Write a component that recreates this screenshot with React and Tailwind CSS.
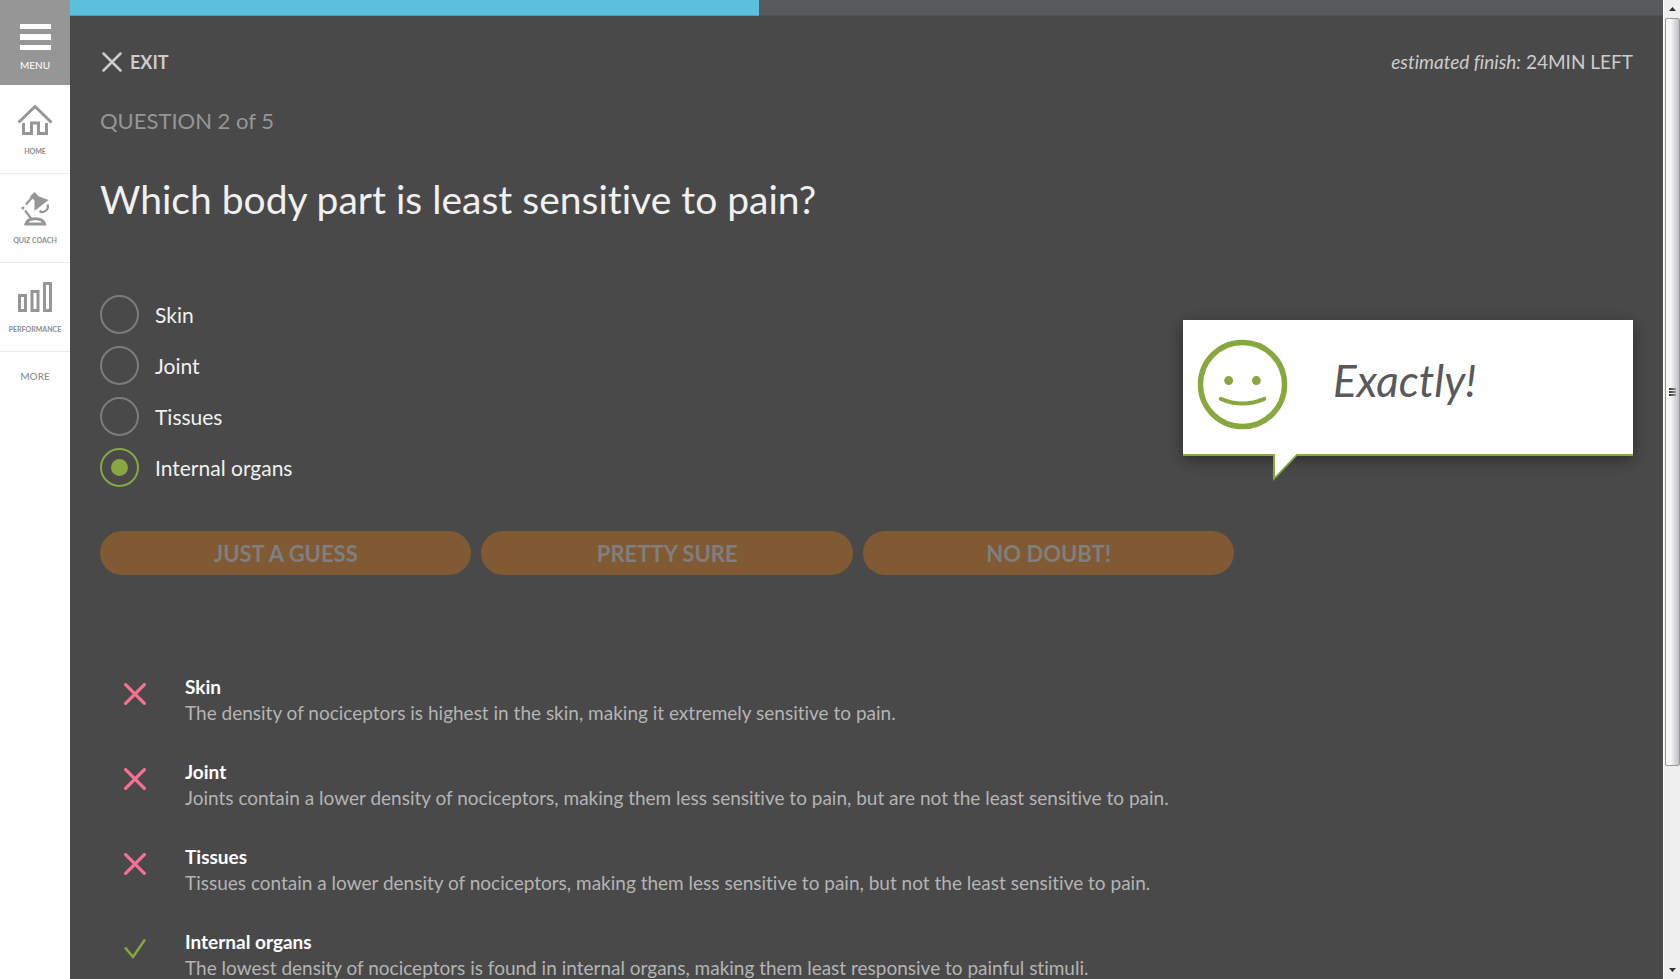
const answers = [
  { id: 'skin', label: 'Skin', correct: false, note: 'The density of nociceptors is highest in the skin, making it extremely sensitive to pain.' },
  { id: 'joint', label: 'Joint', correct: false, note: 'Joints contain a lower density of nociceptors, making them less sensitive to pain, but are not the least sensitive to pain.' },
  { id: 'tissues', label: 'Tissues', correct: false, note: 'Tissues contain a lower density of nociceptors, making them less sensitive to pain, but not the least sensitive to pain.' },
  { id: 'organs', label: 'Internal organs', correct: true, note: 'The lowest density of nociceptors is found in internal organs, making them least responsive to painful stimuli.' },
];

function HomeIcon() {
  return (
    <svg className="h-[34px] w-9" viewBox="0 0 36 34" fill="none" stroke="#969696" strokeWidth="3" aria-hidden="true">
      <path d="M1.500 19.500 18 3.500l16.500 16" />
      <path d="M6.500 20v10.500h8V20h7v10.500h8V20" />
    </svg>
  );
}

function LampIcon() {
  return (
    <svg className="h-[34px] w-9" viewBox="0 0 36 34" fill="none" stroke="#969696" strokeWidth="2.200" aria-hidden="true">
      <path d="M17.500 0l4.500 4.500L31.500 8 17.500 19V8.500l-4.500-4z" fill="#969696" stroke="none" />
      <path d="M15 5.500 9 12.500" />
      <circle cx="6" cy="16" r="1.600" fill="#969696" stroke="none" />
      <path d="M8 18.500 14.500 27" />
      <path d="M30.500 12.500c2 5-4 9.500-8 6.500" />
      <path d="M9 32c2-7 16.500-7 18.500 0z" strokeWidth="3" />
    </svg>
  );
}

function BarsIcon() {
  return (
    <svg className="h-[34px] w-9" viewBox="0 0 36 34" fill="none" stroke="#969696" strokeWidth="3" aria-hidden="true">
      <path d="M2.500 14.500h6v15h-6zM15 10.500h6v19h-6zM27.500 2.500h6v27h-6z" />
    </svg>
  );
}

const nav = [
  { label: 'HOME', Icon: HomeIcon },
  { label: 'QUIZ COACH', Icon: LampIcon },
  { label: 'PERFORMANCE', Icon: BarsIcon },
];

function Sidebar() {
  return (
    <nav className="flex w-[70px] shrink-0 flex-col bg-white text-[#8c8c8c]">
      <button className="flex h-[85px] flex-col items-center bg-[#969696] pt-6 text-white">
        <span className="flex flex-col gap-[5px]">
          <span className="h-[5px] w-[31px] bg-white" />
          <span className="h-[6px] w-[31px] bg-white" />
          <span className="h-[5px] w-[31px] bg-white" />
        </span>
        <span className="mt-[7px] text-[10px] leading-4">MENU</span>
      </button>
      {nav.map(({ label, Icon }) => (
        <a key={label} href="#" className="flex flex-col items-center gap-[10px] border-b border-[#ebebeb] pt-[18px] pb-[18px]">
          <Icon />
          <span className="text-[7px] leading-[8px] font-bold">{label}</span>
        </a>
      ))}
      <a href="#" className="pt-4 text-center text-[10px] leading-4 font-medium">MORE</a>
    </nav>
  );
}

function Cross({ className }) {
  return (
    <svg className={className} viewBox="0 0 20 20" fill="none" stroke="currentColor" strokeLinecap="round" aria-hidden="true">
      <path d="M1.500 1.500l17 17M18.500 1.500l-17 17" />
    </svg>
  );
}

function Check({ className }) {
  return (
    <svg className={className} viewBox="0 0 22 22" fill="none" stroke="currentColor" strokeWidth="2.500" aria-hidden="true">
      <path d="M1 9.500 9 19 21 1.500" />
    </svg>
  );
}

function Feedback() {
  return (
    <aside className="relative flex h-[136px] w-[450px] items-center border-b-2 border-[#86a83e] bg-white shadow-[0_4px_14px_rgba(0,0,0,0.4)]">
      <svg className="ml-[14px] -mt-[6px] h-[91px] w-[91px]" viewBox="0 0 92 92" fill="none" stroke="#86a83e" aria-hidden="true">
        <circle cx="46" cy="46" r="42.500" strokeWidth="5.500" />
        <circle cx="32" cy="42" r="4.500" fill="#86a83e" stroke="none" />
        <circle cx="60" cy="42" r="4.500" fill="#86a83e" stroke="none" />
        <path d="M24 60.500q22 9.500 44 0" strokeWidth="4" strokeLinecap="round" />
      </svg>
      <p className="ml-[45px] -mt-[14px] text-[44px] text-[#58595b] italic">Exactly!</p>
      <svg className="absolute top-[134px] left-[90px] h-[27px] w-[26px]" viewBox="0 0 26 27" aria-hidden="true">
        <path d="M0 0h26L0 27z" fill="#86a83e" />
        <path d="M2 0h21.500L2 22.500z" fill="#fff" />
      </svg>
    </aside>
  );
}

function ScrollBar() {
  return (
    <div className="flex w-[17px] shrink-0 flex-col items-center border-l border-white bg-[#efefef]" aria-hidden="true">
      <div className="flex h-[18px] shrink-0 items-center justify-center">
        <svg className="h-1 w-[7px]" viewBox="0 0 7 4"><path d="M3.500 0 7 4H0z" fill="#333" /></svg>
      </div>
      <div className="flex h-[76.400%] w-[15px] flex-col items-center justify-center gap-px rounded-xs border border-[#979797] bg-linear-to-r from-[#f7f7f7] from-35% to-[#bfc0c5]">
        <span className="h-[2px] w-[7px] bg-linear-to-r from-[#333] to-[#999]" />
        <span className="h-[2px] w-[7px] bg-linear-to-r from-[#333] to-[#999]" />
        <span className="h-[2px] w-[7px] bg-linear-to-r from-[#333] to-[#999]" />
      </div>
      <div className="mt-auto flex h-[18px] shrink-0 items-center justify-center">
        <svg className="h-1 w-[7px]" viewBox="0 0 7 4"><path d="M0 0h7L3.500 4z" fill="#333" /></svg>
      </div>
    </div>
  );
}

export default function App() {
  return (
    <div className="flex h-screen overflow-hidden bg-[#494949] font-['Lato',sans-serif] [font-variant-ligatures:no-common-ligatures]">
      <Sidebar />
      <main className="min-w-0 flex-1 overflow-hidden">
        <div className="h-4 border-b border-[#515254] bg-[#58595b]">
          <div className="h-4 w-[43.250%] border-b border-[#4a9fba] bg-[#5bc0de]" />
        </div>
        <div className="px-[30px]">
          <header className="flex items-center justify-between pt-8 text-[#ccc]">
            <button className="flex items-center gap-2 pl-[2px] text-[18px] leading-7 font-bold">
              <Cross className="h-5 w-5 stroke-[2.5]" />
              EXIT
            </button>
            <p className="text-[19px] leading-7"><em>estimated finish:</em> 24MIN LEFT</p>
          </header>
          <p className="mt-[29px] text-[22px] leading-8 text-[#969696]">QUESTION 2 of 5</p>
          <h1 className="mt-9 text-[39px] leading-[52px] text-[#f0f0f0]">Which body part is least sensitive to pain?</h1>
          <div className="mt-[70px] flex items-start justify-between">
            <div role="radiogroup" aria-label="Answers" className="flex flex-col gap-3">
              {answers.map((a) => (
                <label key={a.id} className="flex items-center gap-4 text-[21px] leading-6 text-[#f0f0f0]">
                  <input
                    type="radio"
                    name="answer"
                    defaultChecked={a.correct}
                    className="grid h-[39px] w-[39px] appearance-none place-items-center rounded-full border-2 border-[#7c7c7c] before:h-[17px] before:w-[17px] before:rounded-full checked:border-[#86a83e] checked:before:bg-[#86a83e]"
                  />
                  {a.label}
                </label>
              ))}
            </div>
            <div className="pt-[25px]">
              <Feedback />
            </div>
          </div>
          <div className="mt-11 grid w-[74%] grid-cols-3 gap-[10px]">
            {['JUST A GUESS', 'PRETTY SURE', 'NO DOUBT!'].map((t) => (
              <button key={t} disabled className="h-11 rounded-full bg-[#805a33] text-[22px] font-bold text-[#7f7f7f]">{t}</button>
            ))}
          </div>
          <ul className="mt-[99px] flex flex-col gap-[33px]">
            {answers.map((a) => (
              <li key={a.id} className="flex pl-6">
                {a.correct ? <Check className="mt-[9px] h-[22px] w-[22px] text-[#86a83e]" /> : <Cross className="mt-[9px] h-[22px] w-[22px] stroke-3 text-[#f4718f]" />}
                <div className="ml-[39px] text-[19px] leading-[26px]">
                  <h2 className="font-bold text-white">{a.label}</h2>
                  <p className="text-[#b4b4b4]">{a.note}</p>
                </div>
              </li>
            ))}
          </ul>
        </div>
      </main>
      <ScrollBar />
    </div>
  );
}
